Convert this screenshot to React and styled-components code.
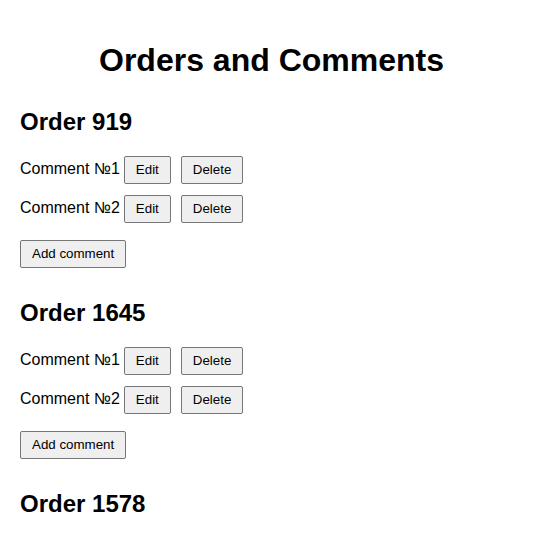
import React from 'react';
import styled, { createGlobalStyle } from 'styled-components';

const orders = [
  { id: 919, comments: ['Comment №1', 'Comment №2'] },
  { id: 1645, comments: ['Comment №1', 'Comment №2'] },
  { id: 1578, comments: ['Comment №1', 'Comment №2'] },
  { id: 2034, comments: ['Comment №1', 'Comment №2'] },
  { id: 387, comments: ['Comment №1', 'Comment №2'] },
  { id: 1122, comments: ['Comment №1', 'Comment №2'] },
  { id: 764, comments: ['Comment №1', 'Comment №2'] },
];

const GlobalStyle = createGlobalStyle`
  body {
    margin: 0;
    background: #fff;
    color: #000;
    font-family: "Liberation Sans", Arial, sans-serif;
  }
`;

const Page = styled.div`
  padding: 42px 37px 60px 20px;
`;

const Title = styled.h1`
  margin: 0 0 29px;
  font-size: 32px;
  line-height: 37px;
  font-weight: bold;
  text-align: center;
`;

const OrderList = styled.div`
  display: flex;
  flex-direction: column;
  gap: 31px;
`;

const OrderBox = styled.section`
  display: flex;
  flex-direction: column;
  align-items: flex-start;
`;

const OrderTitle = styled.h2`
  margin: 0 0 20px;
  font-size: 24px;
  line-height: 28px;
  font-weight: bold;
`;

const CommentList = styled.div`
  display: flex;
  flex-direction: column;
  gap: 11px;
`;

const CommentRow = styled.div`
  display: flex;
  align-items: baseline;
  font-size: 16px;
`;

const Button = styled.button`
  margin-left: ${(p) => (p.$first ? '4px' : '10px')};
  padding: 5px 11px;
  font-family: "Liberation Sans", Arial, sans-serif;
  font-size: 13.333px;
  line-height: 16px;
  color: #000;
  background: #efefef;
  border: 1px solid #767676;
  border-radius: 2px;
`;

const AddButton = styled(Button)`
  margin: 17px 0 0;
`;

function Order({ id, comments }) {
  return (
    <OrderBox>
      <OrderTitle>Order {id}</OrderTitle>
      <CommentList>
        {comments.map((c) => (
          <CommentRow key={c}>
            <span>{c}</span>
            <Button $first>Edit</Button>
            <Button>Delete</Button>
          </CommentRow>
        ))}
      </CommentList>
      <AddButton>Add comment</AddButton>
    </OrderBox>
  );
}

export default function App() {
  return (
    <>
      <GlobalStyle />
      <Page>
        <Title>Orders and Comments</Title>
        <OrderList>
          {orders.map((o) => (
            <Order key={o.id} {...o} />
          ))}
        </OrderList>
      </Page>
    </>
  );
}
